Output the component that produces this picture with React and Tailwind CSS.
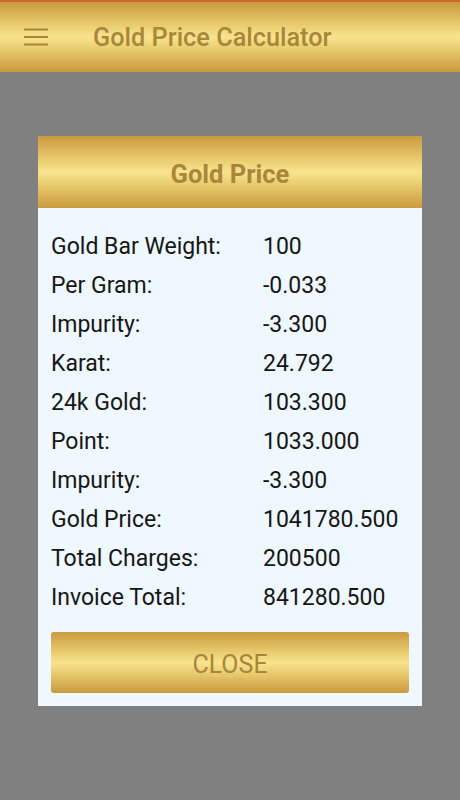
const GOLD = 'bg-[linear-gradient(to_bottom,#c99a3e_0%,#e6c86a_30%,#f8e48e_50%,#e6c86a_70%,#c99a3e_100%)]'

const ROWS = [
  ['Gold Bar Weight:', '100'],
  ['Per Gram:', '-0.033'],
  ['Impurity:', '-3.300'],
  ['Karat:', '24.792'],
  ['24k Gold:', '103.300'],
  ['Point:', '1033.000'],
  ['Impurity:', '-3.300'],
  ['Gold Price:', '1041780.500'],
  ['Total Charges:', '200500'],
  ['Invoice Total:', '841280.500'],
]

export default function App() {
  return (
    <div className="w-[460px] h-[800px] bg-[#808080] flex flex-col font-['Roboto',sans-serif]">
      {/* App bar */}
      <div className={`h-[72px] border-t-2 border-[#d0652e] flex items-center ${GOLD}`}>
        <svg viewBox="0 0 24 24" className="w-[24px] h-[24px] ml-[24px]" fill="none" stroke="#a8863a" strokeWidth={2}>
          <path d="M0 4.5h24M0 12h24M0 19.5h24" />
        </svg>
        <h1 className="ml-[45px] mt-[2px] text-[25.3px] font-medium text-[#a8863a] leading-none">Gold Price Calculator</h1>
      </div>

      {/* Dialog */}
      <div className="mt-[64px] mx-[38px] bg-[#f0f8ff] flex flex-col">
        <div className={`h-[72px] flex items-center justify-center ${GOLD}`}>
          <span className="text-[25.5px] font-bold text-[#a8863a] leading-none mt-[5px]">Gold Price</span>
        </div>
        <div className="pt-[20px] px-[13px] flex flex-col">
          {ROWS.map(([label, value], i) => (
            <div key={i} className="h-[39px] flex items-center text-[23px] text-[#161616]">
              <span className="w-[212px]">{label}</span>
              <span>{value}</span>
            </div>
          ))}
        </div>
        <div className="px-[13px] pt-[14px] pb-[13px]">
          <button className={`w-full h-[61px] pt-[4px] rounded-[3px] text-[25px] text-[#a8863a] ${GOLD}`}>CLOSE</button>
        </div>
      </div>
    </div>
  )
}
